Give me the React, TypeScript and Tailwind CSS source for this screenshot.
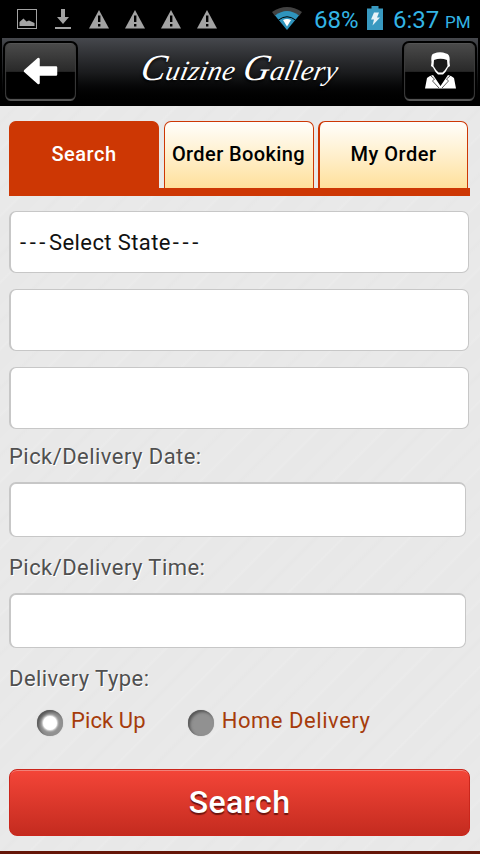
import clsx from 'clsx'
import type { ReactNode } from 'react'

function WarningIcon() {
  return (
    <svg width="20" height="19" viewBox="0 0 20 19">
      <path d="M10 0 20 18.5H0Z" fill="#a3a3a3" />
      <path d="M9 5.5h2.4v6.5H9zM9 14h2.4v2.5H9z" fill="#000" />
    </svg>
  )
}

function StatusBar() {
  return (
    <div className="flex h-[38px] items-start justify-between bg-black pl-[17px] pr-[10px] text-[#33b5e5]">
      <div className="flex items-start pt-[9px]">
        <svg width="20" height="20" viewBox="0 0 20 20">
          <rect x=".5" y=".5" width="19" height="19" fill="none" stroke="#a3a3a3" />
          <path d="M2.5 17V13l4-3.5 3 3 2.5-1 5.5 2.5V17Z" fill="#a3a3a3" />
        </svg>
        <svg className="ml-[18px]" width="16" height="20" viewBox="0 0 16 20" fill="#a3a3a3">
          <path d="M6 0h4v8h4L8 15 2 8h4zM0 18h16v2H0z" />
        </svg>
        <div className="ml-[18px] flex gap-4 pt-px">
          <WarningIcon />
          <WarningIcon />
          <WarningIcon />
          <WarningIcon />
        </div>
      </div>
      <div className="flex items-start">
        <svg className="mt-[7px]" width="30" height="23" viewBox="0 0 30 23">
          <path d="M0 5Q15-5 30 5L27 9Q15 1 3 9Z" fill="#424242" />
          <path d="M3 8.5Q15-.5 27 8.5L15 23Z" fill="#2f94bd" />
          <path d="M6.5 13Q15 6.5 23.5 13" fill="none" stroke="#000" strokeWidth="1" />
          <path d="M11 13Q15 11 19 13L15 19.5Z" fill="#fff" />
        </svg>
        <span className="ml-[12px] mt-[4px] w-[46px] whitespace-nowrap text-[24px] leading-8">68%</span>
        <svg className="ml-[7px] mt-[6px]" width="16" height="24" viewBox="0 0 16 24">
          <path d="M4.5 0h7v2.5H16V24H0V2.5h4.5z" fill="#3899c0" />
          <path d="M7 6.5h5l-2 5h3L5.5 19.5l1.5-6H4z" fill="#e6f2f7" />
        </svg>
        <span className="ml-[10px] mt-[4px] w-[48px] whitespace-nowrap text-[24px] leading-8">6:37</span>
        <span className="ml-[4px] mt-[6px] w-[25px] whitespace-nowrap text-[17px] leading-8">PM</span>
      </div>
    </div>
  )
}

function HeaderButton({ label, children }: { label: string; children: ReactNode }) {
  return (
    <button
      aria-label={label}
      className="flex h-[60px] w-[75px] items-center justify-center rounded-[7px] border-2 border-b-0 border-black bg-[linear-gradient(#4b4b4b,#292929_49%,#000_50%,#000)] pb-[3px] shadow-[inset_1px_0_1px_#3c3c3c,inset_-1px_0_1px_#3c3c3c,inset_0_-2px_1px_#5c5c5c,inset_0_1px_0_#5a5a5a]"
    >
      {children}
    </button>
  )
}

function Header() {
  return (
    <header className="flex h-[68px] items-start justify-between border-x-2 border-black bg-linear-to-b from-[#46484d] via-[#1b1c1e] to-black px-px pt-[3px]">
      <HeaderButton label="Back">
        <svg width="35" height="28" viewBox="0 0 35 28">
          <path
            d="M2 14 15.5 2V10.5H33V17.5H15.5V26Z"
            fill="#fff"
            stroke="#fff"
            strokeWidth="2.5"
            strokeLinejoin="round"
          />
        </svg>
      </HeaderButton>
      <h1 className="mt-[9px] flex w-[200px] origin-center -skew-x-12 items-baseline justify-center whitespace-nowrap font-['Liberation_Serif',serif] text-[28px] leading-9 tracking-[0.4px] text-white italic [text-shadow:0_2px_3px_#000]">
        <span className="text-[37px]">C</span>uizine
        <span className="ml-2 text-[37px]">G</span>allery
      </h1>
      <HeaderButton label="Account">
        <svg className="ml-0.5" width="31" height="37" viewBox="0 0 31 37">
          <path
            d="M6.5 10Q5.5 2 9 1.5Q15-1 21 1.5Q25.5 2 24.5 10L25 14 23 15.5Q21 20 18 22.5H13Q10 20 8 15.5L6 14Z"
            fill="#fff"
          />
          <path d="M9 8Q15.5 5.5 22 8L22.5 14Q20 18.5 17.5 20.5H13.5Q11 18.5 8.5 14Z" fill="#1a1a1a" />
          <path d="M0 36.5 2 26Q4 24 8 23L15.5 34 23 23Q27 24 29 26L31 36.5Z" fill="#fff" />
          <path
            d="M6 24 9.5 27 7.5 29 14 36M25 24 21.5 27 23.5 29 17 36"
            fill="none"
            stroke="#333"
            strokeWidth=".8"
          />
        </svg>
      </HeaderButton>
    </header>
  )
}

const tabs = [
  { name: 'Search', spacing: 'tracking-[0.5px]' },
  { name: 'Order Booking', spacing: 'tracking-[0.4px]' },
  { name: 'My Order', spacing: 'tracking-[0.5px]' },
]

function Tabs() {
  return (
    <nav className="flex h-[75px] w-[461px] gap-[4.5px] border-b-8 border-[#cd3704]">
      {tabs.map((tab, i) => (
        <button
          key={tab.name}
          className={clsx(
            'flex h-[67px] w-[150px] items-center justify-center whitespace-nowrap rounded-t-[7px] border border-b-0 border-[#cd3704] pb-[2px] text-[20px] font-medium',
            tab.spacing,
            i === 0 ? 'bg-[#cd3704] text-white' : 'bg-linear-to-b from-[#fffefb] to-[#ffe09b] text-black',
            i === 2 && 'border-l-2',
          )}
        >
          {tab.name}
        </button>
      ))}
    </nav>
  )
}

function Label({ children }: { children: string }) {
  return (
    <div className="whitespace-nowrap text-[22px] leading-7 tracking-[0.45px] text-[#505050] [text-shadow:1px_1px_0_#fff]">
      {children}
    </div>
  )
}

const box = 'rounded-[7px] border border-l-2 border-[#c7c7c7] bg-white'

function Radio({ label, checked }: { label: string; checked?: boolean }) {
  return (
    <label className="flex items-center gap-[8px]">
      <span className="mt-[4px] flex size-[26px] items-center justify-center rounded-full bg-[#919191] shadow-[inset_2px_2px_3px_#555,0_0_1px_#aaa]">
        {checked && <span className="size-[14px] rounded-full bg-white shadow-[0_0_2px_1px_#eee]" />}
      </span>
      <span
        className={clsx(
          'whitespace-nowrap text-[22px] leading-7 text-[#a63c0b]',
          checked ? 'tracking-[0.1px]' : 'tracking-[0.55px]',
        )}
      >
        {label}
      </span>
    </label>
  )
}

export default function App() {
  return (
    <div className="flex h-[854px] w-[480px] flex-col overflow-hidden bg-[#e8e8e8] font-[Roboto,sans-serif]">
      <StatusBar />
      <Header />
      <main className="h-[745px] bg-[repeating-linear-gradient(135deg,#e9e9e9_0_9px,#e7e7e7_12px,#e9e9e9_15px_29px,#ebebeb_31px,#e8e8e8_33px_47px)] px-[9px] pt-[15px]">
        <Tabs />
        <div className="mt-[15px] flex flex-col gap-4">
          <div className={clsx(box, 'flex h-[62px] w-[460px] items-center pl-[9px] text-[22px] text-[#111]')}>
            <span className="tracking-[3.6px]">---</span>
            <span className="tracking-[0.4px]">Select State</span>
            <span className="ml-[2px] tracking-[3.6px]">---</span>
          </div>
          <div className={clsx(box, 'h-[62px] w-[460px]')} />
          <div className={clsx(box, 'h-[62px] w-[460px]')} />
        </div>
        <div className="mt-[14px]">
          <Label>Pick/Delivery Date:</Label>
        </div>
        <div className={clsx(box, 'mt-[11px] h-[55px] w-[457px] border-t-2')} />
        <div className="mt-[17px]">
          <Label>Pick/Delivery Time:</Label>
        </div>
        <div className={clsx(box, 'mt-[11px] h-[55px] w-[457px] border-t-2')} />
        <div className="mt-[17px]">
          <Label>Delivery Type:</Label>
        </div>
        <div className="mt-[13px] flex h-[30px] gap-[42px] pl-[28px]">
          <Radio label="Pick Up" checked />
          <Radio label="Home Delivery" />
        </div>
        <button className="mt-[33px] flex h-[67px] w-[461px] items-center justify-center rounded-[8px] border border-[#cb261c] bg-linear-to-b from-[#f44538] to-[#c42b1f] pb-[2px] text-[32px] font-medium tracking-[0.4px] text-white shadow-[inset_0_2px_0_-1px_#f18178] [text-shadow:0_2px_1px_#70150e]">
          Search
        </button>
      </main>
      <div className="h-[3px] bg-[#651508]" />
    </div>
  )
}
